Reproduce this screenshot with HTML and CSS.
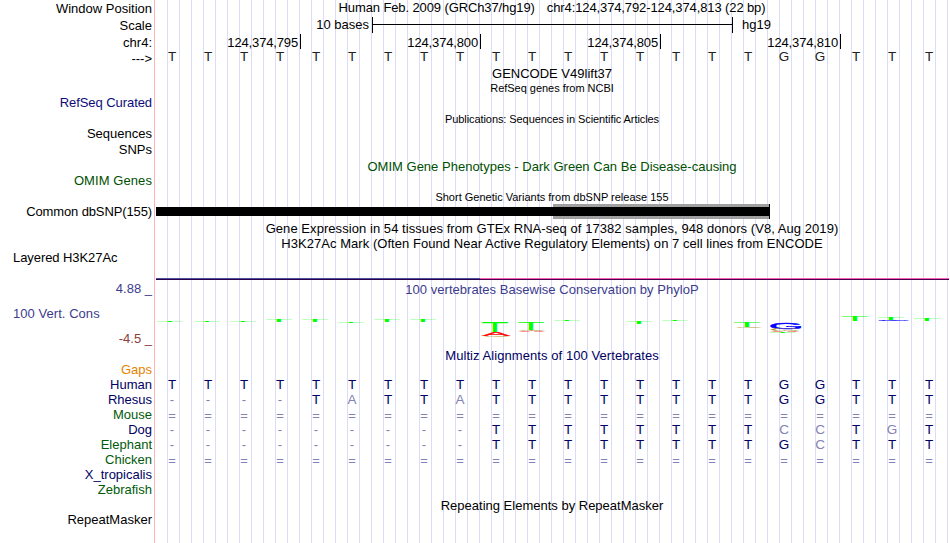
FILE: index.html
```html
<!DOCTYPE html>
<html lang="en">
<head>
  <meta charset="UTF-8">
  <title>Human chr4:124,374,792-124,374,813 hg19</title>
  <link rel="stylesheet" href="styles.css">
</head>
<body>

<div class="browser">
  <div class="labels">
    <div class="label window">Window Position</div>
    <div class="label scale-label">Scale</div>
    <div class="label chrom">chr4:</div>
    <div class="label strand">---&gt;</div>
    <div class="label refseq blue">RefSeq Curated</div>
    <div class="label sequences">Sequences</div>
    <div class="label snps">SNPs</div>
    <div class="label omim-genes green">OMIM Genes</div>
    <div class="label dbsnp">Common dbSNP(155)</div>
    <div class="label h3k27ac left">Layered H3K27Ac</div>
    <div class="label max cons">4.88 _</div>
    <div class="label cons left">100 Vert. Cons</div>
    <div class="label min neg">-4.5 _</div>
    <div class="label gaps">Gaps</div>
    <div class="label navy">Human</div>
    <div class="label navy">Rhesus</div>
    <div class="label species-green">Mouse</div>
    <div class="label navy">Dog</div>
    <div class="label species-green">Elephant</div>
    <div class="label species-green">Chicken</div>
    <div class="label navy">X_tropicalis</div>
    <div class="label species-green">Zebrafish</div>
    <div class="label repeat">RepeatMasker</div>
  </div>

  <div class="tracks">
    <div class="row position"><span>Human Feb. 2009 (GRCh37/hg19)</span><span>chr4:124,374,792-124,374,813 (22 bp)</span></div>
    <div class="row scale">
      <span class="scale-size">10 bases</span>
      <span class="scale-bar"></span>
      <span class="scale-db">hg19</span>
    </div>
    <div class="row ruler">
      <span class="tick first">124,374,795</span>
      <span class="tick">124,374,800</span>
      <span class="tick">124,374,805</span>
      <span class="tick">124,374,810</span>
    </div>
    <div class="row bases reference" data-seq="TTTTTTTTTTTTTTTTTGGTTT"></div>
    <div class="row title gencode"><span>GENCODE V49lift37</span></div>
    <div class="row title small ncbi"><span>RefSeq genes from NCBI</span></div>
    <div class="row title small pubs"><span>Publications: Sequences in Scientific Articles</span></div>
    <div class="row title omim green"><span>OMIM Gene Phenotypes - Dark Green Can Be Disease-causing</span></div>
    <div class="row title small variants"><span>Short Genetic Variants from dbSNP release 155</span></div>
    <div class="row snp"><span class="snp-bar"></span><span class="snp-range"></span></div>
    <div class="row title gtex"><span>Gene Expression in 54 tissues from GTEx RNA-seq of 17382 samples, 948 donors (V8, Aug 2019)</span></div>
    <div class="row title h3mark"><span>H3K27Ac Mark (Often Found Near Active Regulatory Elements) on 7 cell lines from ENCODE</span></div>
    <div class="row signal"><span class="signal-low"></span><span class="signal-high"></span></div>
    <div class="row title phylop cons"><span>100 vertebrates Basewise Conservation by PhyloP</span></div>
    <svg class="logo" id="logo" width="795" height="51" viewBox="155 297 795 51"></svg>
    <div class="row title multiz navy"><span>Multiz Alignments of 100 Vertebrates</span></div>
    <div class="row bases align" data-seq="TTTTTTTTTTTTTTTTTGGTTT"></div>
    <div class="row bases align" data-seq="----TATTATTTTTTTTGGTTT"></div>
    <div class="row bases align" data-seq="======================"></div>
    <div class="row bases align" data-seq="---------TTTTTTTTCCTGT"></div>
    <div class="row bases align" data-seq="---------TTTTTTTTGCTTT"></div>
    <div class="row bases align" data-seq="======================"></div>
    <div class="row title masker"><span>Repeating Elements by RepeatMasker</span></div>
  </div>
</div>

<script>
  const human = 'TTTTTTTTTTTTTTTTTGGTTT';

  document.querySelectorAll('.bases').forEach(row => {
    [...row.dataset.seq].forEach((base, i) => {
      const cell = document.createElement('span');
      cell.textContent = base;
      if (base === '=') cell.className = 'diff gap';
      else if (base === '-') cell.className = 'diff dash';
      else if (base !== human[i]) cell.className = 'diff';
      row.appendChild(cell);
    });
  });

  // letter, left, top, width, height
  const letters = [
    ['T', 157, 321, 26, 1], ['T', 194, 321, 26, 1], ['T', 230, 321, 26, 1],
    ['T', 266, 320, 26, 2], ['T', 302, 319, 26, 3], ['T', 338, 322, 26, 1],
    ['T', 374, 319, 26, 3], ['T', 410, 319, 26, 3],
    ['T', 482, 322, 26, 10], ['A', 482, 332, 28, 4], ['C', 484, 336, 26, 1],
    ['T', 518, 322, 26, 8], ['C', 519, 330, 26, 1], ['A', 519, 331, 26, 1],
    ['T', 554, 320, 26, 1], ['T', 626, 322, 26, 2], ['T', 662, 320, 26, 1],
    ['T', 734, 322, 26, 5], ['C', 736, 327, 26, 1],
    ['G', 771, 322, 30, 7], ['C', 771, 329, 28, 2], ['A', 771, 331, 28, 1], ['T', 770, 332, 26, 1],
    ['T', 842, 316, 26, 5],
    ['T', 878, 318, 26, 2], ['G', 879, 320, 30, 1],
    ['T', 914, 319, 26, 2]
  ];
  // outline box of each letter at font-size 100: left, width, top, height
  const box = { T: [2, 57, 69, 69], A: [0, 66.5, 69, 69], C: [5, 63.5, 70, 71], G: [5, 67.5, 70, 71] };
  const logo = document.getElementById('logo');
  letters.forEach(([ch, x, y, w, h]) => {
    const [l, bw, t, bh] = box[ch];
    const sx = w / bw, sy = h / bh;
    const text = document.createElementNS('http://www.w3.org/2000/svg', 'text');
    text.textContent = ch;
    text.setAttribute('class', 'base-' + ch);
    text.setAttribute('transform', `translate(${x - l * sx} ${y + t * sy}) scale(${sx} ${sy})`);
    logo.appendChild(text);
  });
</script>

</body>
</html>
```

FILE: styles.css
```css
body {
  margin: 0;
  background: #fff;
  font-family: "Liberation Sans", Arial, Helvetica, sans-serif;
  font-size: 13px;
  line-height: 15px;
  color: #000;
}

.browser {
  display: flex;
  width: 950px;
  height: 543px;
  overflow: hidden;
}

/* left column */
.labels {
  width: 152px;
  padding-right: 2px;
}

.label {
  height: 15px;
  text-align: right;
  white-space: pre;
}

.left {
  text-align: left;
  padding-left: 13px;
}

.window { margin-top: 1px; }
.scale-label { margin-top: 2px; }
.chrom { margin-top: 2px; }
.strand { margin-top: 1px; }
.refseq { margin-top: 29px; letter-spacing: -0.07px; }
.sequences { margin-top: 16px; }
.snps { margin-top: 1px; }
.omim-genes { margin-top: 16px; letter-spacing: 0.08px; }
.dbsnp { margin-top: 16px; letter-spacing: -0.12px; }
.h3k27ac { margin-top: 31px; letter-spacing: -0.07px; }
.max { margin-top: 16px; }
.label.left.cons { margin-top: 10px; letter-spacing: 0.05px; }
.min { margin-top: 10px; }
.gaps { margin-top: 16px; color: #e68200; }
.repeat { margin-top: 15px; }

.blue { color: #0c0c78; }
.navy { color: #000064; }
.green { color: #005000; }
.species-green { color: #005a0a; }
.cons { color: #3c3c8c; }
.neg { color: #8c3c3c; }

/* right column with vertical guide lines every 12px */
.tracks {
  flex: 1;
  border-left: 1px solid #ffb4b4;
  background: repeating-linear-gradient(to right, #dcdcf8 0 1px, transparent 1px 12px) 12px 0 no-repeat;
}

.row {
  display: flex;
  white-space: pre;
}

.title, .position {
  width: 794px;
  height: 15px;
  justify-content: center;
}

.small {
  font-size: 11px;
  line-height: 13px;
  height: 13px;
}

.position {
  height: 17px;
  gap: 12px;
  letter-spacing: -0.11px;
}

.scale {
  height: 17px;
}

.scale-size {
  width: 214px;
  padding-right: 3px;
  text-align: right;
}

.scale-bar {
  width: 359px;
  height: 16px;
  border: solid #000;
  border-width: 0 1px;
  background: linear-gradient(#000, #000) 0 7px / 100% 1px no-repeat;
}

.scale-db {
  padding-left: 9px;
}

.ruler {
  height: 15px;
}

.tick {
  box-sizing: border-box;
  width: 180px;
  height: 15px;
  padding: 1px 2px 0 0;
  border-right: 1px solid #000;
  text-align: right;
  letter-spacing: -0.15px;
}

.tick.first { width: 146px; }

.bases {
  height: 15px;
  margin-left: -1px;
  font-size: 13.5px;
}

.bases span {
  width: 36px;
  text-align: center;
}

.bases span:last-child { padding-left: 1px; }

.reference { height: 17px; color: #222; }
.align { color: #000064; }
.align .diff { color: #8282b4; }
.align .dash { font-size: 13px; }
.align .gap { padding-top: 1px; font-size: 13px; }

.ncbi { margin-top: 1px; letter-spacing: -0.03px; }
.pubs { margin-top: 18px; letter-spacing: -0.08px; }
.omim { margin-top: 33px; letter-spacing: 0.01px; }
.variants { margin-top: 17px; }

.snp {
  height: 15px;
  align-items: center;
}

.snp-bar {
  width: 397px;
  height: 9px;
  margin-left: 1px;
  background: #000;
}

.snp-range {
  width: 216px;
  height: 15px;
  border-right: 1px solid #000;
  background: linear-gradient(#a0a0a0 3px, #000 3px 12px, #a0a0a0 12px);
}

.gtex { margin-top: 2px; letter-spacing: 0.06px; }
.h3mark { letter-spacing: 0.045px; }

.signal {
  width: 793px;
  height: 2px;
  margin: 27px 0 2px 1px;
}

.signal-low {
  width: 324px;
  background: linear-gradient(#505096 1px, #280050 1px);
}

.signal-high {
  flex: 1;
  background: linear-gradient(#ff5ab4 1px, #460050 1px);
}

.phylop { letter-spacing: 0.03px; }

.logo {
  display: block;
  font-size: 100px;
}

.base-T { fill: #00ff00; }
.base-A { fill: #ff0000; stroke: #ff0000; stroke-width: 3px; }
.base-C { fill: #b4a03c; }
.base-G { fill: #0000ff; stroke: #0000ff; stroke-width: 4px; }

.multiz { margin-bottom: 14px; letter-spacing: 0.07px; }
.masker { margin-top: 31px; }
```
